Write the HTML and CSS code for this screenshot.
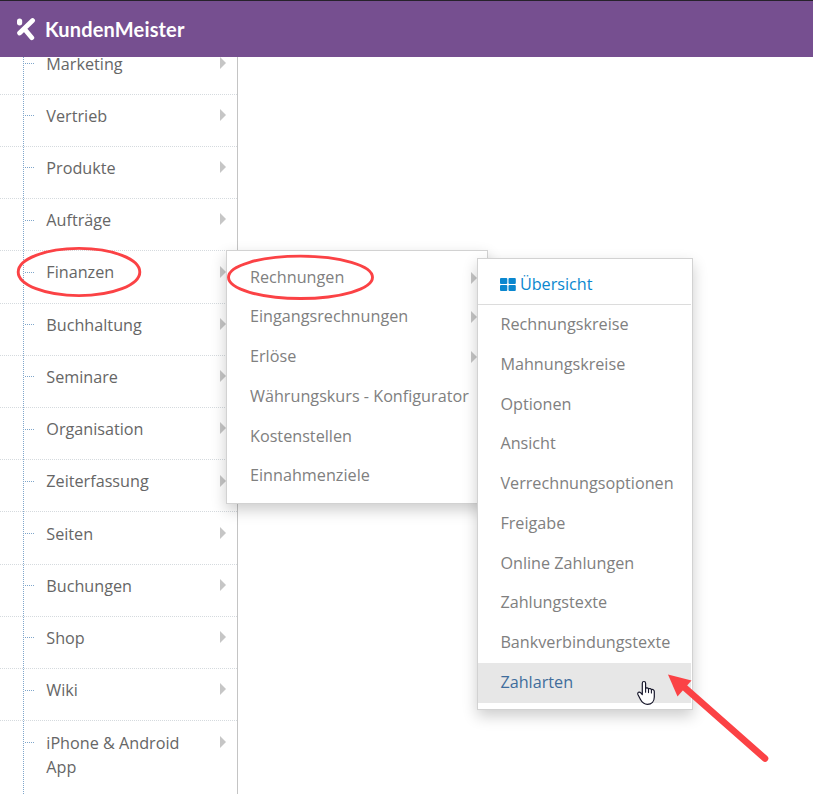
FILE: index.html
```html
<!DOCTYPE html>
<html lang="de">
<head>
<meta charset="utf-8">
<title>KundenMeister</title>
<link rel="stylesheet" href="styles.css">
</head>
<body>
<header class="topbar">
  <svg class="logo" width="20" height="24" viewBox="0 0 20 24" fill="none" stroke="#fff" stroke-linecap="round">
    <path d="M16.6 3.600 3.600 16M8.700 12.200 15.800 20.700" stroke-width="4.800"/>
    <path d="M3.600 4v1.800" stroke-width="5.200"/>
  </svg>
  <span class="brand">KundenMeister</span>
</header>
<nav class="sidebar">
  <ul class="tree">
    <li>Marketing</li>
    <li>Vertrieb</li>
    <li>Produkte</li>
    <li>Aufträge</li>
    <li>Finanzen</li>
    <li>Buchhaltung</li>
    <li>Seminare</li>
    <li>Organisation</li>
    <li>Zeiterfassung</li>
    <li>Seiten</li>
    <li>Buchungen</li>
    <li>Shop</li>
    <li>Wiki</li>
    <li>iPhone &amp; Android App</li>
  </ul>
</nav>
<ul class="menu menu-finance">
  <li class="more">Rechnungen</li>
  <li class="more">Eingangsrechnungen</li>
  <li class="more">Erlöse</li>
  <li>Währungskurs - Konfigurator</li>
  <li>Kostenstellen</li>
  <li>Einnahmenziele</li>
</ul>
<ul class="menu menu-invoices">
  <li class="overview"><svg width="16" height="13" viewBox="0 0 16 13" fill="#0a87cf"><rect width="7.3" height="6" rx="1"/><rect x="8.5" width="7.3" height="6" rx="1"/><rect y="7" width="7.3" height="6" rx="1"/><rect x="8.5" y="7" width="7.3" height="6" rx="1"/></svg>Übersicht</li>
  <li>Rechnungskreise</li>
  <li>Mahnungskreise</li>
  <li>Optionen</li>
  <li>Ansicht</li>
  <li>Verrechnungsoptionen</li>
  <li>Freigabe</li>
  <li>Online Zahlungen</li>
  <li>Zahlungstexte</li>
  <li>Bankverbindungstexte</li>
  <li class="active">Zahlarten</li>
</ul>
<svg class="marks" width="813" height="794" viewBox="0 0 813 794">
  <g fill="none" stroke="#fb4245" stroke-width="2.9">
    <ellipse cx="79" cy="272" rx="60.8" ry="23.6"/>
    <ellipse cx="300.5" cy="277.3" rx="72" ry="21.2"/>
  </g>
  <path d="M684 687 765 758.5" stroke="#fb4245" stroke-width="6.600" stroke-linecap="round"/>
  <path d="M668 674.500 691.500 680.500 677.500 696.500Z" fill="#fb4245"/>
  <path d="M642.300 683.200c0-2.300 3.300-2.300 3.300 0v5.300c.8-1 2.600-.6 2.900.5.800-.9 2.600-.5 2.900.7 1.200-.8 2.900.1 2.900 1.800v5.500c0 4.300-2.700 7.300-6.800 7.300-3.400 0-5.400-1.700-7-4.800l-2.600-5.100c-.8-1.900 1.300-3.200 2.900-1.600l1.500 1.700Z" fill="#fff" stroke="#16162a" stroke-width="1.200" stroke-linejoin="round"/>
  <path d="M645.600 688v4.300M648.500 689v3.600M651.400 690v3" fill="none" stroke="#16162a" stroke-width="1.100" stroke-linecap="round"/>
</svg>
</body>
</html>
```
FILE: styles.css
```css
* { box-sizing: border-box; }
html, body { height: 100%; }
body {
  margin: 0;
  overflow: hidden;
  background: #fff;
  font: 16.200px/24px "Open Sans", sans-serif;
  color: #666;
}
ul { margin: 0; padding: 0; list-style: none; }

.topbar {
  height: 57px;
  padding-left: 16px;
  display: flex;
  align-items: center;
  gap: 9px;
  background: #764f90;
  border-top: 1px solid #26222b;
}
.logo { display: block; margin-top: -1px; }
.brand {
  color: #fff;
  font: 700 20px/24px Lato, sans-serif;
  letter-spacing: 0.160px;
}

.sidebar {
  width: 238px;
  height: 737px;
  overflow: hidden;
  border-right: 1px solid #c4c4c4;
}
.tree {
  position: relative;
  margin-top: -14.650px;
}
.tree::before {
  content: "";
  position: absolute;
  left: 23px;
  top: 0;
  bottom: 0;
  border-left: 1px dotted #7fa6cb;
}
.tree li {
  position: relative;
  min-height: 52.240px;
  padding: 9.150px 40px 18px 46.300px;
  border-bottom: 1px dotted #d5dade;
}
.tree li::before {
  content: "";
  position: absolute;
  left: 25px;
  top: 20.500px;
  width: 9px;
  border-top: 1px dotted #7fa6cb;
}
.tree li::after, .more::after {
  content: "";
  position: absolute;
  right: 11px;
  top: 14.300px;
  border: solid transparent;
  border-width: 6px 0 6px 6px;
  border-left-color: #c6c6c6;
}

.menu {
  position: absolute;
  background: #fff;
  border: 1px solid #d2d2d2;
  box-shadow: 0 6px 14px rgba(0, 0, 0, 0.2);
  color: #808080;
}
.menu li {
  position: relative;
  height: 39.750px;
  padding: 7.550px 0 0 23px;
  white-space: nowrap;
}
.menu-finance {
  left: 226px;
  top: 250px;
  width: 262px;
  height: 254px;
  padding-top: 6px;
}
.menu-finance .more::after { right: 10px; top: 14.700px; }
.menu-invoices {
  left: 477px;
  top: 258px;
  width: 216px;
  height: 452px;
  padding: 5px 1px 0 0;
}
.menu-invoices li { padding: 7.100px 0 0 22.400px; }
.menu-invoices .overview {
  height: 41px;
  padding-top: 8px;
  border-bottom: 1px solid #dcdcdc;
  color: #0a87cf;
}
.overview svg { margin-right: 3.500px; vertical-align: -1px; }
.menu-invoices .active { background: #e7e7e7; color: #3f6d9c; }

.marks {
  position: absolute;
  left: 0;
  top: 0;
  pointer-events: none;
}
```
